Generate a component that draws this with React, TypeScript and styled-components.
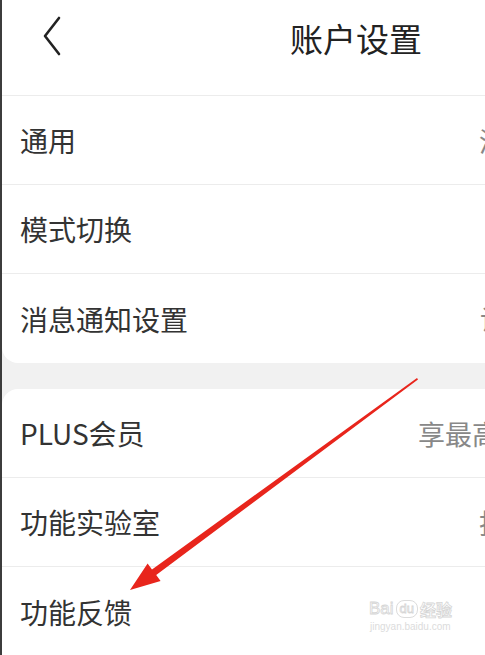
import styled, { createGlobalStyle } from 'styled-components'

const GlobalStyle = createGlobalStyle`
    html, body {
        margin: 0;
        padding: 0;
        background: #fff;
    }
    body {
        font-family: "Noto Sans CJK SC", "Noto Sans", sans-serif;
        overflow: hidden;
    }
`

const Page = styled.div`
    position: relative;
    width: 485px;
    height: 655px;
    box-sizing: border-box;
    border-left: 2px solid #3c3c3c;
    background: #f1f1f1;
    overflow: hidden;
`
const Header = styled.div`
    height: 96px;
    display: flex;
    align-items: flex-start;
    padding-top: 16px;
    box-sizing: border-box;
    background: #fff;
    border-bottom: 1px solid #ececec;
`
const Back = styled.div`
    width: 288px;
    padding-left: 38px;
    box-sizing: border-box;
    display: flex;
`
const Title = styled.div`
    font-size: 33px;
    line-height: 44px;
    color: #222;
    white-space: nowrap;
`
const Card = styled.div<{ $top?: boolean }>`
    background: #fff;
    border-radius: ${p => p.$top ? '16px 0 0 0' : '0 0 0 16px'};
    margin-bottom: ${p => p.$top ? '0' : '26px'};
`
const Row = styled.div<{ $valueAt: number }>`
    height: 89px;
    display: grid;
    grid-template-columns: ${p => p.$valueAt}px max-content;
    align-items: center;
    padding-left: 18px;
    border-bottom: 1px solid #ececec;
    box-sizing: border-box;

    &:last-child {
        border-bottom: none;
    }
`
const Label = styled.div`
    font-size: 28px;
    color: #333;
    white-space: nowrap;
`
const Value = styled.div`
    font-size: 27px;
    color: #888;
    white-space: nowrap;
`
const Arrow = styled.svg`
    position: absolute;
    left: 0;
    top: 0;
    pointer-events: none;
`
const Watermark = styled.div`
    position: absolute;
    left: 367px;
    top: 598px;
    font-family: "Liberation Sans", sans-serif;
`
const Brand = styled.div`
    display: flex;
    align-items: center;
    gap: 2px;
    font-size: 17px;
    line-height: 22px;
    color: #fff;
    -webkit-text-stroke: 0.8px #d6d6d6;
`
const Du = styled.span`
    font-size: 13px;
    line-height: 16px;
    padding: 0 3px;
    border: 1px solid #dcdcdc;
    border-radius: 8px;
`
const Jy = styled.span`
    font-family: "Noto Sans CJK SC", sans-serif;
    font-size: 16px;
    font-weight: bold;
`
const Site = styled.div`
    font-size: 10px;
    line-height: 14px;
    color: #dcdcdc;
    padding-left: 1px;
`

const firstGroup = [
    { label: '通用', value: '清理缓存', at: 459 },
    { label: '模式切换', value: '', at: 459 },
    { label: '消息通知设置', value: '设置', at: 460 },
]
const secondGroup = [
    { label: 'PLUS会员', value: '享最高折扣', at: 398 },
    { label: '功能实验室', value: '抢先体验', at: 459 },
    { label: '功能反馈', value: '', at: 459 },
]

export default function App() {
    return (
        <>
            <GlobalStyle />
            <Page>
                <Header>
                    <Back>
                        <svg width="24" height="40" viewBox="0 0 24 40">
                            <polyline points="19,2 5,20 19,38" fill="none" stroke="#222" strokeWidth="2.6" strokeLinecap="round" strokeLinejoin="round" />
                        </svg>
                    </Back>
                    <Title>账户设置</Title>
                </Header>
                <Card>
                    {firstGroup.map(r => (
                        <Row key={r.label} $valueAt={r.at}>
                            <Label>{r.label}</Label>
                            <Value>{r.value}</Value>
                        </Row>
                    ))}
                </Card>
                <Card $top>
                    {secondGroup.map(r => (
                        <Row key={r.label} $valueAt={r.at}>
                            <Label>{r.label}</Label>
                            <Value>{r.value}</Value>
                        </Row>
                    ))}
                </Card>
                <Watermark>
                    <Brand>
                        <span>Bai</span>
                        <Du>du</Du>
                        <Jy>经验</Jy>
                    </Brand>
                    <Site>jingyan.baidu.com</Site>
                </Watermark>
                <Arrow width="485" height="655" viewBox="0 0 485 655">
                    <polygon
                        points="415,378 416,379.5 154.2,575 158.6,581 128,590 145.6,563.4 150,569.4"
                        fill="#e8251c"
                    />
                </Arrow>
            </Page>
        </>
    )
}
